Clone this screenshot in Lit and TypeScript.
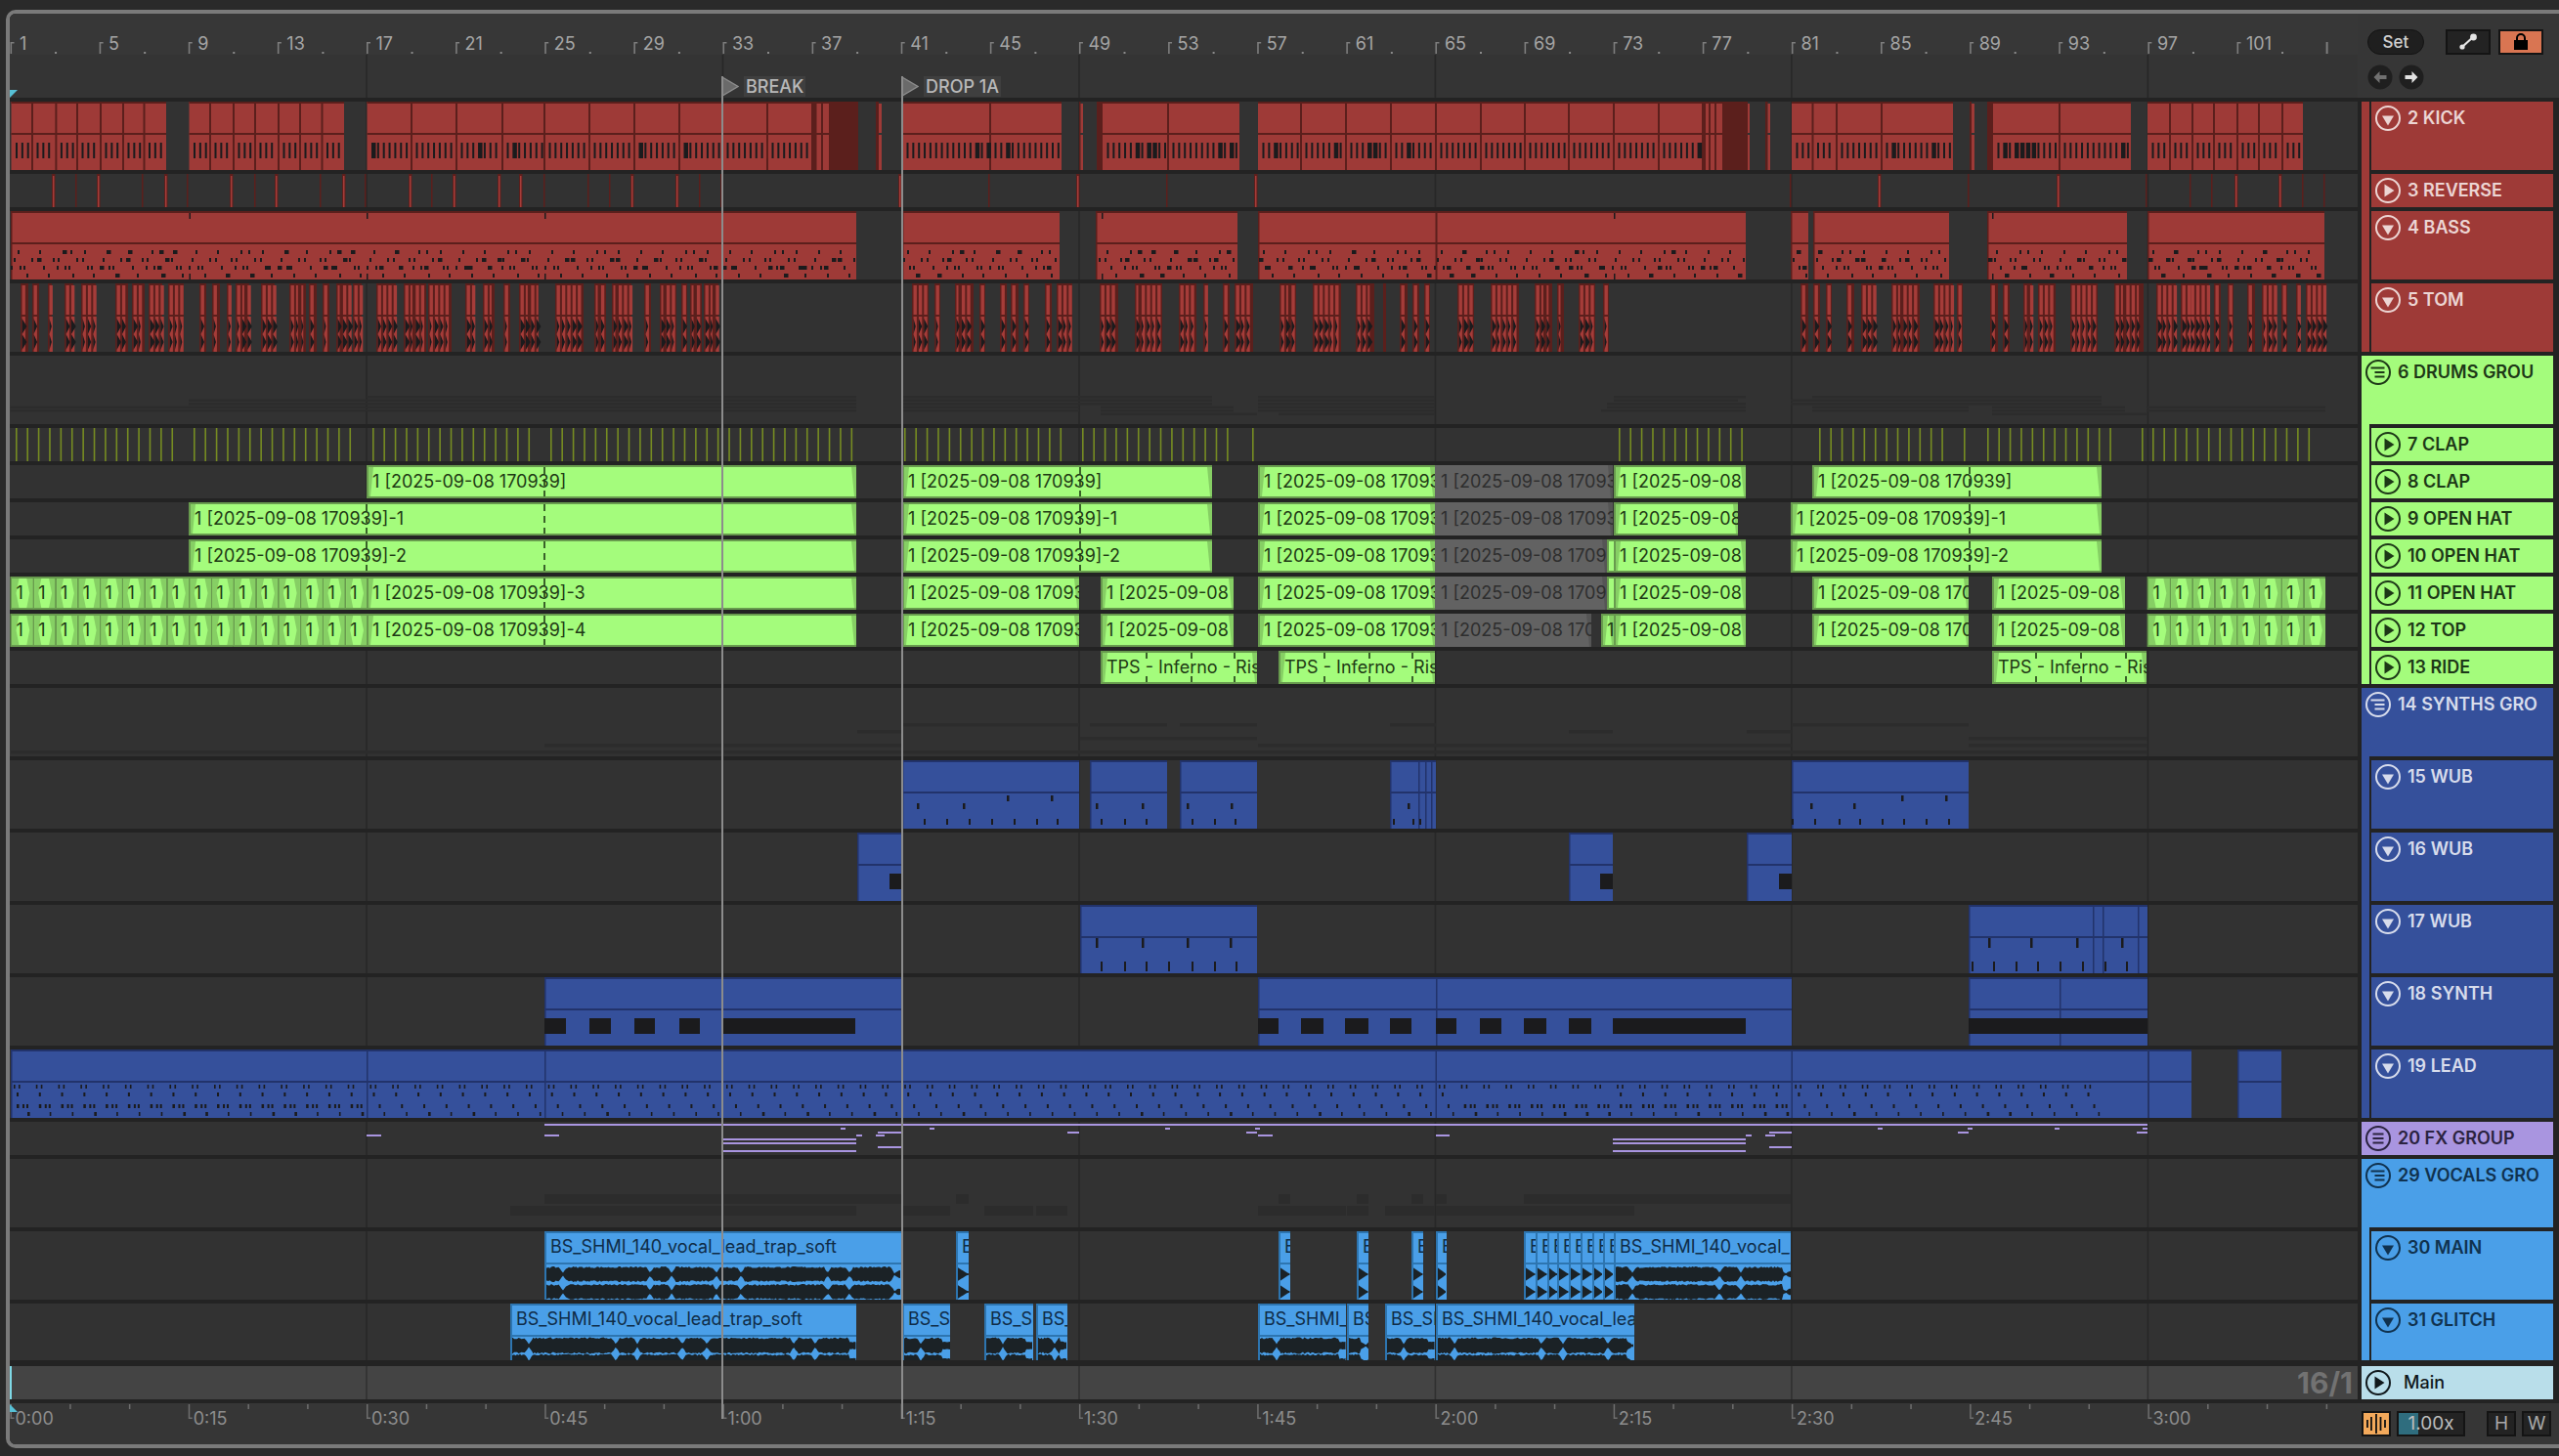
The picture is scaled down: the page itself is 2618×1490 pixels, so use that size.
import { LitElement, html, css, svg } from "lit";
import { customElement } from "lit/decorators.js";

// arrangement geometry, all x values are page pixels
const barX = (b: number) => 10.5 + 22.78 * (b - 1);
const GRID = [375, 739.5, 1104, 1468.4, 1832.9, 2197.4];

const RED = { fill: "#9e3a37", dark: "#5b1f1c" };
const BLUE = { fill: "#35509b", dark: "#22336b" };
const BLACK = "#1b1b1d";

const bx = (x: number, y: number, w: number, h: number) => `M${x} ${y}h${w}v${h}h${-w}z`;
const paint = (d: string, fill: string) => svg`<path d=${d} fill=${fill}></path>`;

let seed = 7;
const rnd = () => {
  seed = (seed * 16807) % 2147483647;
  return seed / 2147483647;
};

type Range = number[];
type Label = { a: number; b: number; text: string; cls: string };

function grid(t: number, h: number) {
  return paint(GRID.map((x) => bx(x - 0.75, t, 1.5, h)).join(""), "#272727");
}

// ---- red tracks ----
function kick(t: number) {
  const sections: [number, number, number[]][] = [
    [11.5, 170, [33, 57.4, 79, 103, 126, 147.5]],
    [193.5, 352, [215, 239, 261, 285, 307, 329.5]],
    [375.5, 830, [421, 467, 514, 557, 603, 649, 695, 739, 785]],
    [923, 1086, [1013]],
    [1128, 1268, [1195]],
    [1287, 1741, [1331, 1377, 1423, 1469, 1515, 1560, 1605, 1651, 1697]],
    [1833, 1998, [1854.5, 1879, 1925]],
    [2039, 2180, [2107]],
    [2197, 2356, [2220, 2243, 2265, 2289, 2311, 2335]],
  ];
  let fill = "";
  let dark = "";
  let ink = "";
  for (const [a, b, divs] of sections) {
    fill += bx(a, t, b - a, 70);
    dark += bx(a, t, b - a, 2) + bx(a, t + 32, b - a, 2);
    for (const d of divs) dark += bx(d - 1, t, 2, 70);
    const stops = [a, ...divs, b];
    for (let i = 0; i < stops.length - 1; i++) {
      for (let n = stops[i] + 4.5; n < stops[i + 1] - 2.5; n += 5.85) {
        const thick = stops[i + 1] - stops[i] > 30 && rnd() < 0.13;
        ink += bx(n, t + 42, thick ? 4.5 : 2, 16);
      }
    }
  }
  for (const [a, b] of [[830, 878], [896, 899], [1104, 1105.5], [1122, 1128], [1741, 1788], [1806, 1808.5], [2015, 2017], [2033, 2039]]) {
    dark += bx(a, t, b - a, 70);
  }
  for (const [a, b] of [[835.5, 840], [842, 848], [899, 902], [1105.5, 1108], [1745, 1748], [1750, 1754], [1756, 1762], [1788, 1790], [1808.5, 1811], [2017, 2020]]) {
    fill += bx(a, t + 2, b - a, 30) + bx(a, t + 34, b - a, 36);
  }
  return [paint(dark, RED.dark), paint(fill, RED.fill), paint(dark.length ? sectionLines(sections, t) : "", RED.dark), paint(ink, BLACK)];
}

function sectionLines(sections: [number, number, number[]][], t: number) {
  let d = "";
  for (const [a, b, divs] of sections) {
    d += bx(a, t, b - a, 2) + bx(a, t + 32, b - a, 2);
    for (const v of divs) d += bx(v - 1, t, 2, 70);
  }
  return d;
}

function reverse(t: number) {
  const redOnes = [54, 100, 169, 236, 282, 351, 419, 464, 510, 532, 646, 692, 920, 1102, 1284, 1922, 2105, 2287, 2332];
  const darkOnes = [77, 145, 191, 260, 327, 373, 441, 556, 601, 623, 715, 737, 1011, 1193, 1831, 2013, 2195, 2240, 2262, 2355, 2377];
  let dark = "";
  let fill = "";
  for (const x of redOnes) {
    dark += bx(x - 1, t, 3.5, 34);
    fill += bx(x, t + 2, 1.5, 32);
  }
  for (const x of darkOnes) dark += bx(x, t, 1.5, 34);
  return [paint(dark, RED.dark), paint(fill, "#a53c39")];
}

const NOTE_ROWS = [
  [7, 29, 53, 61, 75],
  [3, 21, 27, 43, 48, 67, 73],
  [0, 9, 13, 33, 47, 55, 59, 78, 82],
  [16, 38, 63, 84],
];

function bass(t: number) {
  const ranges: Range[] = [[11, 876], [923, 1084], [1121, 1266], [1287, 1786], [1832, 1850], [1855, 1994], [2033, 2176], [2197, 2378]];
  let fill = "";
  let dark = "";
  let ink = "";
  for (const [a, b] of ranges) {
    fill += bx(a, t, b - a, 70);
    dark += bx(a, t, b - a, 2) + bx(a, t + 32, b - a, 2) + bx(a, t, 1.5, 70);
    NOTE_ROWS.forEach((row, r) => {
      for (let k = 0; k < 27; k++) {
        for (const off of row) {
          const x = 11 + k * 91 + off;
          if (x >= a && x < b - 2) {
            const w = rnd() < 0.22 ? 4.5 : 2;
            ink += bx(x, t + 40 + r * 8, Math.min(w, b - x), 4);
          }
        }
      }
    });
  }
  dark += bx(1468.5, t, 2, 70);
  for (const x of [193.5, 375, 557, 1127, 1651, 2038]) {
    ink += bx(x, t + 2, 1.5, 6) + bx(x, t + 64, 1.5, 6);
  }
  return [paint(fill, RED.fill), paint(dark, RED.dark), paint(ink, BLACK)];
}

const TOM: Range[] = [
  [21, 29], [33, 40], [49, 53], [66, 75], [83, 98], [118, 131], [135, 148], [152, 166], [172, 188],
  [204, 211], [217, 225], [232, 236], [241, 255], [267, 281], [296, 313], [316, 324], [330, 337], [344, 359], [361, 370],
  [385, 405], [413, 436], [438, 462], [476, 485], [494, 506], [515, 522], [531, 551], [568, 597], [608, 620], [626, 646],
  [659, 666], [675, 692], [697, 703], [706, 718], [720, 735],
  [933, 950], [956, 962], [977, 996], [1002, 1008], [1023, 1030], [1034, 1042], [1047, 1053], [1069, 1076], [1081, 1097],
  [1125, 1144], [1161, 1189], [1206, 1224], [1231, 1236], [1251, 1258], [1263, 1282],
  [1309, 1326], [1343, 1372], [1387, 1406], [1415, 1418], [1432, 1440], [1445, 1452], [1457, 1463],
  [1491, 1508], [1525, 1554], [1570, 1588], [1593, 1600], [1615, 1632], [1640, 1646],
  [1842, 1850], [1855, 1862], [1868, 1874], [1889, 1897], [1904, 1919], [1935, 1964], [1978, 1998], [2002, 2008],
  [2036, 2044], [2049, 2056], [2070, 2079], [2085, 2103], [2118, 2146], [2163, 2193],
  [2206, 2226], [2231, 2240], [2240, 2260], [2265, 2272], [2279, 2285], [2299, 2307], [2314, 2329], [2334, 2340], [2349, 2353], [2359, 2380],
];

function tom(t: number) {
  let dark = "";
  let fill = "";
  let ink = "";
  for (const [a, b] of TOM) {
    dark += bx(a, t, b - a, 70);
    for (let x = a + 1.5; x < b - 1.5; x += 5.4) {
      const w = rnd() < 0.15 ? 2 : 3.4;
      fill += bx(x, t + 2, w, 30) + bx(x, t + 34, w, 36);
      const tip = 2 + rnd() * 3;
      for (const y of [t + 36, t + 52]) {
        ink += `M${x} ${y}l${tip} 8l${-tip} 8z`;
      }
    }
  }
  return [paint(dark, RED.dark), paint(fill, "#a53c39"), paint(ink, BLACK)];
}

// ---- group overviews, child clips squashed into thin bands ----
function overview(t: number, rows: Range[][], y0: number, pitch: number, h: number) {
  let d = "";
  rows.forEach((row, i) => {
    for (const [a, b] of row) d += bx(a, t + y0 + i * pitch, b - a, h);
  });
  return paint(d, "#2c2c2c");
}

// ---- green tracks ----
const CLAP: Range[] = [[16, 177], [198, 359], [381, 541], [563, 873], [925, 1086], [1107, 1258], [1281, 1282], [1656, 1782], [1861, 1987], [2009, 2010], [2033, 2169], [2191, 2192], [2202, 2363]];

function clap(t: number) {
  let d = "";
  for (const [a, b] of CLAP) {
    for (let x = a; x <= b; x += 11.39) d += bx(x, t, 1.6, 34);
  }
  return paint(d, "#768c22");
}

type GClip = { a: number; b: number; text: string; grey?: boolean; small?: boolean };

const STAMP = "1 [2025-09-08 170939]";
const ones = (from: number, count: number): GClip[] =>
  Array.from({ length: count }, (_, i) => ({ a: from + i * 22.78, b: from + (i + 1) * 22.78, text: "1", small: true }));

const row8: GClip[] = [
  { a: 375, b: 876, text: STAMP }, { a: 923, b: 1240, text: STAMP }, { a: 1287, b: 1468, text: STAMP },
  { a: 1468, b: 1650, text: STAMP, grey: true }, { a: 1651, b: 1786, text: STAMP }, { a: 1854, b: 2150, text: STAMP },
];
const row9: GClip[] = [
  { a: 193, b: 876, text: STAMP + "-1" }, { a: 923, b: 1240, text: STAMP + "-1" }, { a: 1287, b: 1468, text: STAMP },
  { a: 1468, b: 1650, text: STAMP, grey: true }, { a: 1651, b: 1778, text: STAMP }, { a: 1832, b: 2150, text: STAMP + "-1" },
];
const row10: GClip[] = [
  { a: 193, b: 876, text: STAMP + "-2" }, { a: 923, b: 1240, text: STAMP + "-2" }, { a: 1287, b: 1468, text: STAMP },
  { a: 1468, b: 1644, text: STAMP, grey: true }, { a: 1644, b: 1651, text: "" }, { a: 1651, b: 1786, text: STAMP }, { a: 1832, b: 2150, text: STAMP + "-2" },
];
const row11: GClip[] = [
  ...ones(10.5, 16), { a: 375, b: 876, text: STAMP + "-3" }, { a: 923, b: 1104, text: STAMP }, { a: 1126, b: 1262, text: STAMP },
  { a: 1287, b: 1468, text: STAMP }, { a: 1468, b: 1644, text: STAMP, grey: true }, { a: 1644, b: 1651, text: "" }, { a: 1651, b: 1786, text: STAMP },
  { a: 1854, b: 2014, text: STAMP }, { a: 2038, b: 2174, text: STAMP }, ...ones(2196.6, 8),
];
const row12: GClip[] = [
  ...ones(10.5, 16), { a: 375, b: 876, text: STAMP + "-4" }, { a: 923, b: 1104, text: STAMP }, { a: 1126, b: 1262, text: STAMP },
  { a: 1287, b: 1468, text: STAMP }, { a: 1468, b: 1628, text: STAMP, grey: true }, { a: 1638, b: 1651, text: "1" }, { a: 1651, b: 1786, text: STAMP },
  { a: 1854, b: 2014, text: STAMP }, { a: 2038, b: 2174, text: STAMP }, ...ones(2196.6, 8),
];
const row13: GClip[] = [
  { a: 1126, b: 1286, text: "TPS - Inferno - Rise" }, { a: 1308, b: 1468, text: "TPS - Inferno - Rise" }, { a: 2038, b: 2196, text: "TPS - Inferno - Rise" },
];

function greens(t: number, clips: GClip[], dashes: number[], dashKind = "7 5") {
  const out = [];
  let base = "";
  let fill = "";
  let fade = "";
  let gBase = "";
  let gFill = "";
  let gFade = "";
  for (const c of clips) {
    const w = c.b - c.a;
    if (c.grey) {
      gFill += bx(c.a, t, w, 34);
      gFade += `M${c.b - 5} ${t}L${c.b} ${t}L${c.b} ${t + 34}L${c.b - 2} ${t + 34}z`;
      gBase += "";
      continue;
    }
    base += bx(c.a, t, w, 34);
    fill += bx(c.a + 2, t + 2, w - 2, 30);
    if (c.small) {
      const l = c.a + 2;
      const r = c.b;
      fade += `M${l} ${t + 2}h7l-3 15l3 15h-7z M${r} ${t + 2}h-6l3 15l-3 15h6z`;
    } else if (w > 12) {
      fade += `M${c.a + 2} ${t + 2}h5l-3 30h-2z M${c.b} ${t + 2}h-5l3 30h2z`;
    }
  }
  out.push(paint(gFill, "#626262"), paint(gFade, "#555555"));
  out.push(paint(base, "#689b4e"), paint(fill, "#a4fc7c"), paint(fade, "#86cf64"));
  for (const x of dashes) {
    out.push(svg`<line x1=${x} x2=${x} y1=${t + 2} y2=${t + 32} stroke="#1f3b14" stroke-width="1.6" stroke-dasharray=${dashKind}></line>`);
  }
  return out;
}

const gLabels = (clips: GClip[]): Label[] =>
  clips.filter((c) => c.text).map((c) => ({ a: c.a, b: c.b, text: c.text, cls: c.grey ? "clip grey" : "clip green" }));

// ---- blue tracks ----
const WUB15: Range[] = [[923, 1104], [1115, 1194], [1207, 1286], [1422, 1469], [1833, 2014]];
const WUB16: Range[] = [[877, 922.5], [1605, 1650], [1787, 1833]];
const WUB17: Range[] = [[1105, 1286], [2014, 2197]];
const SYN18: Range[] = [[557, 922], [1287, 1833], [2014, 2197]];
const LEAD19: Range[] = [[11, 2197], [2197.5, 2242], [2289, 2334]];

function blueBoxes(t: number, ranges: Range[], split: number, divs: number[]) {
  let fill = "";
  let dark = "";
  for (const [a, b] of ranges) {
    fill += bx(a, t, b - a, 70);
    dark += bx(a, t, b - a, 2) + bx(a, t + split, b - a, 2) + bx(a, t, 1.5, 70);
  }
  for (const x of divs) dark += bx(x, t, 1.5, 70);
  return [paint(fill, BLUE.fill), paint(dark, BLUE.dark)];
}

function wub15(t: number) {
  const top = [1030, 1075, 2015 - 70, 1990];
  const mid = [938, 985, 1121, 1168, 1214, 1259, 1440, 1852, 1896];
  const low = [945, 968, 991, 1014, 1037, 1060, 1081, 1126, 1150, 1172, 1219, 1242, 1263, 1425, 1445, 1452, 1833, 1856, 1881, 1902, 1925, 1947, 1970, 1993];
  let ink = "";
  for (const x of top) ink += bx(x, t + 36, 2.5, 6);
  for (const x of mid) ink += bx(x, t + 44, 2.5, 6);
  for (const x of low) ink += bx(x, t + 60, 2, 6);
  return [...blueBoxes(t, WUB15, 32, [1451, 1458, 1464]), paint(ink, BLACK)];
}

function wub16(t: number) {
  let ink = "";
  for (const [a, b] of [[910, 922.5], [1637, 1650], [1820, 1833]]) {
    ink += bx(a, t + 42, b - a, 16);
  }
  return [...blueBoxes(t, WUB16, 32, []), paint(ink, BLACK)];
}

function wub17(t: number) {
  let ink = "";
  for (const x of [1121, 1168, 1214, 1258, 2034, 2077, 2124, 2170]) ink += bx(x, t + 34, 2.5, 10);
  for (const x of [1126, 1150, 1172, 1195, 1219, 1242, 1264, 2017, 2039, 2062, 2084, 2107, 2130, 2153, 2175]) ink += bx(x, t + 58, 2, 10);
  return [...blueBoxes(t, WUB17, 32, [2141, 2151, 2187]), paint(ink, BLACK)];
}

function synth(t: number) {
  let ink = "";
  const blocks = [[557, 579], [603, 625], [649, 670], [695, 716], [740, 875], [1287, 1308], [1331, 1354], [1376, 1400], [1422, 1444], [1469, 1490], [1514, 1536], [1559, 1582], [1605, 1628], [1650, 1786], [2014, 2197]];
  for (const [a, b] of blocks) ink += bx(a, t + 42, b - a, 16);
  return [...blueBoxes(t, SYN18, 32, [1469, 2107]), paint(ink, BLACK)];
}

function lead(t: number) {
  let ink = "";
  for (let x = 11; x < 2140; x += 22.78) {
    const burst = x < 375 || (x > 1469 && x < 1820);
    ink += bx(x + 3, t + 36, 1.6, 4) + bx(x + 8, t + 36, 1.6, 4);
    if (x < 1469 || x > 1640) ink += bx(x + 6, t + 44, 2, 4);
    ink += bx(x + 12, t + 56, 2, 4);
    if (burst) ink += bx(x + 6, t + 56, 2.5, 4) + bx(x + 16, t + 56, 2, 4);
    ink += bx(x + 17, t + 64, rnd() < 0.3 ? 2.6 : 1.6, 4);
  }
  return [...blueBoxes(t, LEAD19, 32, [375, 557, 1468.5, 1832.5]), paint(ink, BLACK)];
}

// ---- fx lines ----
function fxLines(t: number) {
  const y = (v: number) => t + v;
  const pieces: number[][] = [
    [557, 2197, 2],
    ...[860, 951, 1192, 1284, 1921, 2013, 2102, 2192].map((x) => [x, x + 5, 6]),
    [375, 390, 13], [557, 572, 13],
    [898, 922, 10], [1092, 1104, 10], [1275, 1286, 10], [1810, 1833, 10], [2003, 2014, 10], [2186, 2197, 10],
    [876, 882, 13], [896, 905, 13], [1287, 1302, 13], [1469, 1483, 13], [1786, 1792, 13], [1806, 1816, 13],
    [739, 876, 17], [1650, 1786, 17], [739, 876, 21], [1650, 1786, 21],
    [898, 922, 25], [1810, 1833, 25], [739, 876, 29], [1650, 1786, 29],
  ];
  return paint(pieces.map(([a, b, v]) => bx(a, y(v), b - a, 2)).join(""), "#a995e0");
}

// ---- vocal tracks ----
type VClip = { a: number; b: number; text: string };

const DIPS = [19, 108, 130, 176];

function waveform(c: VClip, cy: number, hh: number) {
  const w = c.b - c.a;
  const up: string[] = [];
  const low: string[] = [];
  for (let x = c.a + 1; x <= c.b; x += 1.5) {
    const off = x - c.a;
    let e: number;
    if (w < 20) {
      e = Math.max(0.1, 1 - off / w);
    } else {
      const p = off % 182;
      const dist = Math.min(...DIPS.map((d) => Math.abs(p - d)));
      e = Math.min(1, 0.2 + dist / 5) * (0.78 + rnd() * 0.22);
      if (w - off < 8) e *= 0.5;
    }
    up.push(`${x} ${(cy - hh * e).toFixed(1)}`);
    low.unshift(`${x} ${(cy + hh * e).toFixed(1)}`);
  }
  return `M${up.join("L")}L${low.join("L")}z`;
}

function vocals(t: number, clips: VClip[], centres: number[], hh: number, divs: number[]) {
  let fill = "";
  let dark = "";
  let ink = "";
  for (const c of clips) {
    fill += bx(c.a, t, c.b - c.a, 70);
    dark += bx(c.a, t, c.b - c.a, 2) + bx(c.a, t + 32, c.b - c.a, 2) + bx(c.a, t, 2, 70);
    for (const cy of centres) ink += waveform(c, t + cy, hh);
  }
  for (const x of divs) dark += bx(x, t, 1.6, 70);
  return [paint(fill, "#4a9fe8"), paint(ink, "#1b2226"), paint(dark, "#2d75b0")];
}

const LEAD_TXT = "BS_SHMI_140_vocal_lead_trap_soft";
const cutAt = (pts: number[]): VClip[] => pts.slice(0, -1).map((x, i) => ({ a: x, b: pts[i + 1], text: "B" }));
const row30: VClip[] = [
  { a: 557, b: 922, text: LEAD_TXT }, { a: 978, b: 991, text: "B" }, { a: 1308, b: 1320, text: "B" }, { a: 1388, b: 1400, text: "B" },
  { a: 1444, b: 1456, text: "B" }, { a: 1469, b: 1480, text: "B" },
  ...cutAt([1559, 1571, 1583, 1593, 1605, 1617, 1629, 1640, 1651]), { a: 1651, b: 1832, text: LEAD_TXT },
];
const row31: VClip[] = [
  { a: 522, b: 876, text: LEAD_TXT }, { a: 923, b: 972, text: LEAD_TXT }, { a: 1007, b: 1057, text: LEAD_TXT }, { a: 1060, b: 1092, text: LEAD_TXT },
  { a: 1287, b: 1377, text: LEAD_TXT }, { a: 1378, b: 1400, text: LEAD_TXT }, { a: 1417, b: 1468, text: LEAD_TXT }, { a: 1469, b: 1672, text: LEAD_TXT },
];
const vLabels = (clips: VClip[]): Label[] => clips.map((c) => ({ a: c.a, b: c.b, text: c.text, cls: "clip vocal" }));

const ranges = (clips: { a: number; b: number; grey?: boolean }[]): Range[] => clips.filter((c) => !c.grey).map((c) => [c.a, c.b]);

// ---- lanes, top to bottom ----
type Lane = { h: number; art: (t: number) => unknown; labels?: Label[] };

const LANES: Lane[] = [
  { h: 70, art: kick },
  { h: 34, art: reverse },
  { h: 70, art: bass },
  { h: 70, art: tom },
  { h: 70, art: (t) => overview(t, [ranges(row8), ranges(row9), ranges(row10), ranges(row11), ranges(row12), ranges(row13)], 41, 3.5, 2.6) },
  { h: 34, art: clap },
  { h: 34, art: (t) => greens(t, row8, [557, 1105, 2015]), labels: gLabels(row8) },
  { h: 34, art: (t) => greens(t, row9, [375, 557, 1105, 2015]), labels: gLabels(row9) },
  { h: 34, art: (t) => greens(t, row10, [375, 557, 1105, 2015]), labels: gLabels(row10) },
  { h: 34, art: (t) => greens(t, row11, [557]), labels: gLabels(row11) },
  { h: 34, art: (t) => greens(t, row12, [557]), labels: gLabels(row12) },
  { h: 34, art: (t) => greens(t, row13, [1173, 1219, 1263, 1355, 1401, 1445, 2083, 2129, 2175], "6 18 6"), labels: gLabels(row13) },
  { h: 70, art: (t) => overview(t, [WUB15, WUB16, WUB17, SYN18, [[11, 2197]]], 36, 7, 3.5) },
  { h: 70, art: wub15 },
  { h: 70, art: wub16 },
  { h: 70, art: wub17 },
  { h: 70, art: synth },
  { h: 70, art: lead },
  { h: 34, art: fxLines },
  { h: 70, art: (t) => overview(t, [ranges(row30.map((c) => ({ ...c, a: Math.min(c.a, 1651) }))), ranges(row31)], 36, 12, 10) },
  { h: 70, art: (t) => vocals(t, row30, [44, 62], 8, []), labels: vLabels(row30) },
  { h: 58, art: (t) => vocals(t, row31, [43, 60], 8.5, []), labels: vLabels(row31) },
];

// ---- track headers ----
type Fold = "down" | "play" | "stack" | "list";
const GROUPS = [
  {
    color: "red",
    kids: [
      { h: 70, fold: "down", name: "2 KICK" }, { h: 34, fold: "play", name: "3 REVERSE" },
      { h: 70, fold: "down", name: "4 BASS" }, { h: 70, fold: "down", name: "5 TOM" },
    ],
  },
  {
    color: "green",
    head: { h: 70, fold: "stack", name: "6 DRUMS GROU" },
    kids: [
      { h: 34, fold: "play", name: "7 CLAP" }, { h: 34, fold: "play", name: "8 CLAP" }, { h: 34, fold: "play", name: "9 OPEN HAT" },
      { h: 34, fold: "play", name: "10 OPEN HAT" }, { h: 34, fold: "play", name: "11 OPEN HAT" }, { h: 34, fold: "play", name: "12 TOP" }, { h: 34, fold: "play", name: "13 RIDE" },
    ],
  },
  {
    color: "blue",
    head: { h: 70, fold: "stack", name: "14 SYNTHS GRO" },
    kids: [
      { h: 70, fold: "down", name: "15 WUB" }, { h: 70, fold: "down", name: "16 WUB" }, { h: 70, fold: "down", name: "17 WUB" },
      { h: 70, fold: "down", name: "18 SYNTH" }, { h: 70, fold: "down", name: "19 LEAD" },
    ],
  },
  { color: "purple", head: { h: 34, fold: "list", name: "20 FX GROUP" }, kids: [] },
  {
    color: "sky",
    head: { h: 70, fold: "stack", name: "29 VOCALS GRO" },
    kids: [{ h: 70, fold: "down", name: "30 MAIN" }, { h: 58, fold: "down", name: "31 GLITCH" }],
  },
];

function foldIcon(kind: Fold) {
  const inner = {
    down: svg`<path d="M7 10.5h12l-6 10z" fill="currentColor"></path>`,
    play: svg`<path d="M9.5 6.5v13l10-6.5z" fill="currentColor"></path>`,
    stack: svg`<path d="M5.5 8.5h14M9.5 13h10M9.5 17.5h10" stroke="currentColor" stroke-width="2" fill="none"></path>`,
    list: svg`<path d="M7.5 8.5h11M7.5 13h11M7.5 17.5h11" stroke="currentColor" stroke-width="2" fill="none"></path>`,
  }[kind];
  return html`<svg class="fold" viewBox="0 0 26 26" width="26" height="26">
    <circle cx="13" cy="13" r="12" fill="none" stroke="currentColor" stroke-width="2"></circle>${inner}
  </svg>`;
}

@customElement("app-root")
export class AppRoot extends LitElement {
  static styles = css`
    :host {
      display: block;
      width: 2618px;
      height: 1490px;
      box-sizing: border-box;
      padding: 10px 0 0 6px;
      background: #2a2a2a;
      font-family: "Inter", "Liberation Sans", sans-serif;
      overflow: hidden;
    }
    .frame {
      position: relative;
      box-sizing: border-box;
      height: 1472px;
      border: 4px solid #7a7a7a;
      border-right: none;
      border-radius: 10px 0 0 10px;
      background: #232323;
      display: flex;
      flex-direction: column;
      overflow: hidden;
    }
    .top {
      height: 86px;
      display: flex;
      background: #363636;
      flex: none;
    }
    .timeline {
      width: 2402px;
    }
    .ruler,
    .seconds {
      position: relative;
      background: #373737;
      color: #a5a5a5;
      font-size: 18px;
      line-height: 20px;
    }
    .ruler {
      height: 42px;
    }
    .ruler svg,
    .seconds svg,
    .marker svg.art,
    .lane svg.art {
      position: absolute;
      left: 0;
      top: 0;
      display: block;
    }
    .tick {
      position: absolute;
      top: 21px;
    }
    .marker {
      position: relative;
      height: 44px;
      background: #343434;
    }
    .locator {
      position: absolute;
      top: 22px;
      display: flex;
      align-items: stretch;
      height: 21px;
      gap: 5px;
    }
    .flag {
      display: block;
    }
    .locator span {
      background: #3f3f3f;
      color: #b9b9b9;
      font-size: 18px;
      font-weight: 500;
      line-height: 21px;
      padding: 0 2px;
    }
    .ctrl {
      flex: 1;
      padding: 16px 0 0 10px;
      box-sizing: border-box;
    }
    .ctrl-row {
      display: flex;
      align-items: center;
    }
    .set {
      width: 58px;
      height: 26px;
      box-sizing: border-box;
      border-radius: 13px;
      background: #1f1f1f;
      border: 1px solid #141414;
      color: #cfcfcf;
      font-size: 17px;
      font-weight: 500;
      line-height: 24px;
      text-align: center;
      margin-right: 22px;
    }
    .sq {
      width: 46px;
      height: 26px;
      box-sizing: border-box;
      border: 2px solid #141414;
      background: #232323;
      display: flex;
      align-items: center;
      justify-content: center;
      margin-right: 8px;
    }
    .sq.on {
      background: #d97552;
    }
    .arrows {
      gap: 6px;
      margin-top: 10px;
    }
    .round {
      width: 26px;
      height: 26px;
      display: block;
    }
    .body {
      flex: none;
      display: flex;
      gap: 4px;
      padding-top: 4px;
    }
    .lanes {
      width: 2402px;
      display: flex;
      flex-direction: column;
      gap: 4px;
    }
    .lane {
      position: relative;
      background: #323232;
      overflow: hidden;
    }
    .clip {
      position: absolute;
      top: 0;
      box-sizing: border-box;
      padding-left: 6px;
      overflow: hidden;
      white-space: nowrap;
      font-size: 18px;
      line-height: 34px;
    }
    .green {
      color: #1e3a14;
    }
    .grey {
      color: #2e2e2e;
    }
    .vocal {
      color: #0f2c47;
      line-height: 32px;
    }
    .heads {
      width: 196px;
      display: flex;
      flex-direction: column;
      gap: 4px;
    }
    .group.red {
      background: #9e3a37;
      color: #ecd5d3;
    }
    .group.green {
      background: #a4fc7c;
      color: #1d3817;
    }
    .group.blue {
      background: #35509b;
      color: #d7dcec;
    }
    .group.purple {
      background: #a995e0;
      color: #2b2340;
    }
    .group.sky {
      background: #4a9fe8;
      color: #10324f;
    }
    .head {
      box-sizing: border-box;
      display: flex;
      align-items: flex-start;
      padding: 4px 0 0 4px;
      gap: 7px;
      overflow: hidden;
      white-space: nowrap;
      font-size: 18px;
      font-weight: 600;
      line-height: 26px;
    }
    .kids {
      margin-left: 8px;
      border-left: 2px solid #232323;
      background: #232323;
      display: flex;
      flex-direction: column;
      gap: 4px;
    }
    .has-head .kids {
      padding-top: 4px;
    }
    .group.red .kid {
      background: #9e3a37;
    }
    .group.green .kid {
      background: #a4fc7c;
    }
    .group.blue .kid {
      background: #35509b;
    }
    .group.sky .kid {
      background: #4a9fe8;
    }
    .fold {
      flex: none;
      display: block;
    }
    .mainrow {
      flex: none;
      margin-top: 6px;
      display: flex;
      gap: 4px;
      height: 34px;
    }
    .mainlane {
      position: relative;
      width: 2402px;
      box-sizing: border-box;
      background: #444444;
      display: flex;
      align-items: center;
      justify-content: flex-end;
      padding-right: 5px;
      color: #727272;
      font-size: 30px;
      font-weight: 700;
    }
    .mainlane span {
      position: relative;
    }
    .mainlane svg {
      position: absolute;
      left: 0;
      top: 0;
    }
    .mainhead {
      width: 196px;
      background: #b9deea;
      color: #10181c;
      gap: 13px;
      font-weight: 500;
    }
    .bottom {
      flex: none;
      margin-top: 4px;
      height: 42px;
      display: flex;
      background: #363636;
    }
    .seconds {
      width: 2402px;
      height: 42px;
      background: #363636;
      color: #8d8d8d;
    }
    .stamp {
      position: absolute;
      top: 6px;
    }
    .tools {
      flex: 1;
      display: flex;
      align-items: flex-start;
      padding: 8px 0 0 4px;
      color: #a8a8a8;
      font-size: 19px;
      line-height: 22px;
    }
    .audio {
      width: 30px;
      height: 26px;
      box-sizing: border-box;
      border: 2px solid #141414;
      background: #f3a95b;
      display: block;
    }
    .rate {
      position: relative;
      width: 70px;
      height: 26px;
      box-sizing: border-box;
      border: 2px solid #141414;
      background: #232323;
      margin: 0 22px 0 6px;
      text-align: center;
      color: #bcbcbc;
    }
    .rate i {
      position: absolute;
      left: 0;
      top: 0;
      bottom: 0;
      width: 20px;
      background: #2f6d7e;
    }
    .rate span {
      position: relative;
    }
    .key {
      width: 30px;
      height: 26px;
      box-sizing: border-box;
      border: 2px solid #141414;
      background: #232323;
      text-align: center;
      margin-right: 6px;
    }
    .locline {
      position: absolute;
      top: 64px;
      height: 1374px;
      width: 2px;
      background: #8c8c8c;
    }
  `;

  private ruler() {
    const bars = Array.from({ length: 26 }, (_, i) => 1 + i * 4);
    let ticks = "";
    let dots = "";
    for (const b of bars) {
      const x = barX(b) - 10;
      if (b < 105) ticks += bx(x, 29, 1.6, 12) + bx(x, 29, 4, 1.6);
      dots += bx(barX(b + 2) - 10, 39, 2, 2);
    }
    ticks += bx(barX(105) - 10, 29, 2, 12);
    return html`<div class="ruler">
      <svg width="2402" height="42">${paint(ticks, "#7d7d7d")}${paint(dots, "#8a8a8a")}</svg>
      ${bars.filter((b) => b < 105).map((b) => html`<span class="tick" style="left:${barX(b) - 0.5}px">${b}</span>`)}
    </div>`;
  }

  private marker() {
    const flag = html`<svg class="flag" viewBox="0 0 18 21" width="18" height="21">
      <path d="M1 1L17 10.5L1 20z" fill="#6a6a6a" stroke="#8c8c8c" stroke-width="1.4"></path>
    </svg>`;
    return html`<div class="marker">
      <svg class="art" width="2402" height="44">
        ${paint(GRID.map((x) => bx(x - 10.75, 0, 1.5, 44)).join(""), "#272727")}
        <path d="M0 36h8L0 44z" fill="#56c0d6"></path>
      </svg>
      <div class="locator" style="left:728px">${flag}<span>BREAK</span></div>
      <div class="locator" style="left:912px">${flag}<span>DROP 1A</span></div>
    </div>`;
  }

  private controls() {
    return html`<div class="ctrl">
      <div class="ctrl-row">
        <div class="set">Set</div>
        <div class="sq">
          <svg viewBox="0 0 24 20" width="24" height="20"><path d="M6 15L17 5" stroke="#e4e4e4" stroke-width="2.2"></path><circle cx="17.5" cy="5" r="3.4" fill="#e4e4e4"></circle><circle cx="6" cy="15" r="2.6" fill="#e4e4e4"></circle></svg>
        </div>
        <div class="sq on">
          <svg viewBox="0 0 18 20" width="18" height="20"><path d="M5 9V6a4 4 0 0 1 8 0v3" stroke="#000" stroke-width="2" fill="none"></path><rect x="2" y="8" width="14" height="10" fill="#000"></rect></svg>
        </div>
      </div>
      <div class="ctrl-row arrows">
        <svg class="round" viewBox="0 0 26 26"><circle cx="13" cy="13" r="12.5" fill="#1f1f1f"></circle><path d="M6.5 13L12.5 7v4h7v4h-7v4z" fill="#707070"></path></svg>
        <svg class="round" viewBox="0 0 26 26"><circle cx="13" cy="13" r="12.5" fill="#1f1f1f"></circle><path d="M19.5 13L13.5 7v4h-7v4h7v4z" fill="#e2e2e2"></path></svg>
      </div>
    </div>`;
  }

  private lanes() {
    seed = 7;
    let t = 104;
    return LANES.map((lane) => {
      const top = t;
      t += lane.h + 4;
      return html`<div class="lane" style="height:${lane.h}px">
        <svg class="art" viewBox="10 ${top} 2402 ${lane.h}" width="2402" height=${lane.h}>
          ${grid(top, lane.h)}${lane.art(top)}
        </svg>
        ${(lane.labels ?? []).map(
          (l) => html`<div class=${l.cls} style="left:${l.a - 10}px;width:${l.b - l.a}px">${l.text}</div>`,
        )}
      </div>`;
    });
  }

  private heads() {
    return GROUPS.map(
      (g) => html`<div class="group ${g.color} ${g.head ? "has-head" : ""}">
        ${g.head
          ? html`<div class="head" style="height:${g.head.h}px">${foldIcon(g.head.fold as Fold)}<span>${g.head.name}</span></div>`
          : null}
        ${g.kids.length
          ? html`<div class="kids">
              ${g.kids.map(
                (k) => html`<div class="head kid" style="height:${k.h}px">${foldIcon(k.fold as Fold)}<span>${k.name}</span></div>`,
              )}
            </div>`
          : null}
      </div>`,
    );
  }

  private seconds() {
    const labels = ["0:00", "0:15", "0:30", "0:45", "1:00", "1:15", "1:30", "1:45", "2:00", "2:15", "2:30", "2:45", "3:00"];
    let major = "";
    let minor = "";
    labels.forEach((_, i) => {
      const x = barX(1 + i * 8) - 10;
      major += bx(x, 1, 1.5, 15) + bx(x, 14.5, 4, 1.5);
      for (const k of [1, 2]) minor += bx(x + k * 60.7, 1, 1.5, 5);
    });
    minor += bx(barX(105) - 10, 1, 1.5, 5);
    return html`<div class="seconds">
      <svg width="2402" height="42">
        ${paint(major, "#6e6e6e")}${paint(minor, "#6e6e6e")}
        <path d="M0 1L8 9H0z" fill="#56c0d6"></path>
      </svg>
      ${labels.map((s, i) => html`<span class="stamp" style="left:${barX(1 + i * 8) - 5}px">${s}</span>`)}
    </div>`;
  }

  render() {
    return html`<div class="frame">
      <div class="top">
        <div class="timeline">${this.ruler()}${this.marker()}</div>
        ${this.controls()}
      </div>
      <div class="body">
        <div class="lanes">${this.lanes()}</div>
        <div class="heads">${this.heads()}</div>
      </div>
      <div class="mainrow">
        <div class="mainlane">
          <svg width="2402" height="34">
            ${paint(GRID.map((x) => bx(x - 10.75, 0, 1.5, 34)).join(""), "#2f2f2f")}
            <rect x="0" y="0" width="2" height="34" fill="#7fd9e6"></rect>
          </svg>
          <span>16/1</span>
        </div>
        <div class="head mainhead">${foldIcon("play")}<span>Main</span></div>
      </div>
      <div class="bottom">
        ${this.seconds()}
        <div class="tools">
          <svg class="audio" viewBox="0 0 26 22">
            <path d="M4 7v8M8 4v14M13 1v20M17.5 4v14M22 7v8" stroke="#111" stroke-width="1.8"></path>
          </svg>
          <div class="rate"><i></i><span>1.00x</span></div>
          <div class="key">H</div>
          <div class="key">W</div>
        </div>
      </div>
      <div class="locline" style="left:728px"></div>
      <div class="locline" style="left:912px"></div>
    </div>`;
  }
}
